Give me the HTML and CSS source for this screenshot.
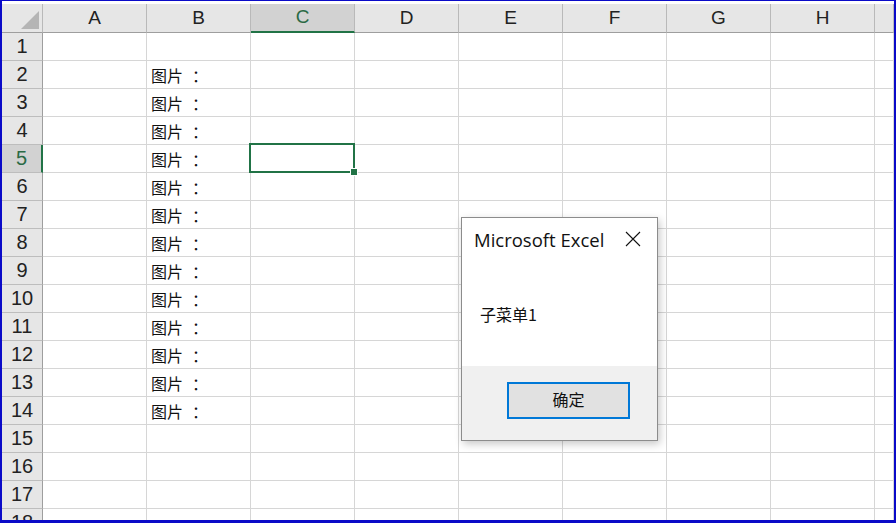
FILE: index.html
```html
<!DOCTYPE html>
<html lang="zh-CN">
<head>
<meta charset="utf-8">
<title>Excel</title>
<link rel="stylesheet" href="styles.css">
</head>
<body>
<div class="frame">
  <div class="sheet">
    <div class="row head">
      <div class="corner"><span class="tri"></span></div>
      <div class="ch">A</div><div class="ch">B</div><div class="ch sel">C</div><div class="ch">D</div><div class="ch">E</div><div class="ch">F</div><div class="ch">G</div><div class="ch">H</div><div class="ch"></div>
    </div>
    <div class="row"><div class="rh">1</div><div></div><div></div><div></div><div></div><div></div><div></div><div></div><div></div><div></div></div>
    <div class="row"><div class="rh">2</div><div></div><div class="txt">图片<span class="colon">：</span></div><div></div><div></div><div></div><div></div><div></div><div></div><div></div></div>
    <div class="row"><div class="rh">3</div><div></div><div class="txt">图片<span class="colon">：</span></div><div></div><div></div><div></div><div></div><div></div><div></div><div></div></div>
    <div class="row"><div class="rh">4</div><div></div><div class="txt">图片<span class="colon">：</span></div><div></div><div></div><div></div><div></div><div></div><div></div><div></div></div>
    <div class="row"><div class="rh sel">5</div><div></div><div class="txt">图片<span class="colon">：</span></div><div class="active"><span class="selbox"><span class="handle"></span></span></div><div></div><div></div><div></div><div></div><div></div><div></div></div>
    <div class="row"><div class="rh">6</div><div></div><div class="txt">图片<span class="colon">：</span></div><div></div><div></div><div></div><div></div><div></div><div></div><div></div></div>
    <div class="row"><div class="rh">7</div><div></div><div class="txt">图片<span class="colon">：</span></div><div></div><div></div><div></div><div></div><div></div><div></div><div></div></div>
    <div class="row"><div class="rh">8</div><div></div><div class="txt">图片<span class="colon">：</span></div><div></div><div></div><div></div><div></div><div></div><div></div><div></div></div>
    <div class="row"><div class="rh">9</div><div></div><div class="txt">图片<span class="colon">：</span></div><div></div><div></div><div></div><div></div><div></div><div></div><div></div></div>
    <div class="row"><div class="rh">10</div><div></div><div class="txt">图片<span class="colon">：</span></div><div></div><div></div><div></div><div></div><div></div><div></div><div></div></div>
    <div class="row"><div class="rh">11</div><div></div><div class="txt">图片<span class="colon">：</span></div><div></div><div></div><div></div><div></div><div></div><div></div><div></div></div>
    <div class="row"><div class="rh">12</div><div></div><div class="txt">图片<span class="colon">：</span></div><div></div><div></div><div></div><div></div><div></div><div></div><div></div></div>
    <div class="row"><div class="rh">13</div><div></div><div class="txt">图片<span class="colon">：</span></div><div></div><div></div><div></div><div></div><div></div><div></div><div></div></div>
    <div class="row"><div class="rh">14</div><div></div><div class="txt">图片<span class="colon">：</span></div><div></div><div></div><div></div><div></div><div></div><div></div><div></div></div>
    <div class="row"><div class="rh">15</div><div></div><div></div><div></div><div></div><div></div><div></div><div></div><div></div><div></div></div>
    <div class="row"><div class="rh">16</div><div></div><div></div><div></div><div></div><div></div><div></div><div></div><div></div><div></div></div>
    <div class="row"><div class="rh">17</div><div></div><div></div><div></div><div></div><div></div><div></div><div></div><div></div><div></div></div>
    <div class="row"><div class="rh">18</div><div></div><div></div><div></div><div></div><div></div><div></div><div></div><div></div><div></div></div>
  </div>

  <div class="dialog">
    <div class="dlg-head">
      <span class="dlg-title">Microsoft Excel</span>
      <svg class="dlg-close" width="16" height="16" viewBox="0 0 16 16"><path d="M1 1 L15 15 M15 1 L1 15" stroke="#111" stroke-width="1.1" fill="none"/></svg>
    </div>
    <div class="dlg-body">子菜单1</div>
    <div class="dlg-foot"><button class="dlg-btn">确定</button></div>
  </div>
</div>
</body>
</html>
```

FILE: styles.css
```css
html, body {
  margin: 0;
  padding: 0;
  background: #fff;
}

.frame {
  position: relative;
  width: 896px;
  height: 523px;
  box-sizing: border-box;
  border: solid #0a0ac8;
  border-width: 1px 2px 3px 2px;
  padding-top: 3px;
  overflow: hidden;
  background: #fff;
  font-family: "Liberation Sans", Arial, sans-serif;
}

.sheet {
  display: flex;
  flex-direction: column;
}

.row {
  display: grid;
  grid-template-columns: 41px repeat(8, 104px) 1fr;
  height: 28px;
  flex: none;
}

.row > div {
  box-sizing: border-box;
  border-right: 1px solid #d6d6d6;
  border-bottom: 1px solid #d6d6d6;
}

.row.head {
  height: 29px;
}

.row.head > div {
  background: #e6e6e6;
  border-right: 1px solid #b9b9b9;
  border-bottom: 1px solid #9e9e9e;
}

.corner {
  display: flex;
  justify-content: flex-end;
  align-items: flex-end;
  padding: 0 3px 3px 0;
}

.tri {
  width: 18px;
  height: 18px;
  background: #b5b5b5;
  clip-path: polygon(100% 0, 100% 100%, 0 100%);
}

.ch {
  display: flex;
  align-items: center;
  justify-content: center;
  font-size: 19px;
  color: #222;
  padding-bottom: 1px;
}

.row.head > .ch.sel {
  background: #d2d2d2;
  border-bottom: 2px solid #217346;
  color: #2a6a45;
}

.row > .rh {
  background: #e6e6e6;
  border-right: 1px solid #9e9e9e;
  border-bottom: 1px solid #bdbdbd;
  display: flex;
  align-items: center;
  justify-content: center;
  font-size: 20px;
  color: #222;
}

.row > .rh.sel {
  background: #d2d2d2;
  border-right: 2px solid #217346;
  color: #2a6a45;
}

.txt {
  display: flex;
  align-items: center;
  padding-left: 4px;
  font-family: "Noto Sans CJK SC", sans-serif;
  font-size: 16px;
  color: #111;
  white-space: nowrap;
}

.colon {
  padding-left: 9px;
}

.active {
  position: relative;
}

.selbox {
  position: absolute;
  left: -2px;
  top: -2px;
  right: -1px;
  bottom: -1px;
  border: 2px solid #217346;
}

.handle {
  position: absolute;
  right: -4px;
  bottom: -4px;
  width: 6px;
  height: 6px;
  background: #217346;
  box-shadow: 0 0 0 1px #fff;
}

.dialog {
  position: absolute;
  left: 459px;
  top: 216px;
  width: 197px;
  height: 224px;
  box-sizing: border-box;
  border: 1px solid #8c8c8c;
  background: #fff;
  box-shadow: 2px 3px 8px rgba(0, 0, 0, 0.22);
  display: flex;
  flex-direction: column;
}

.dlg-head {
  height: 42px;
  display: flex;
  align-items: center;
  justify-content: space-between;
  padding: 0 16px 0 12px;
  flex: none;
}

.dlg-title {
  font-family: "Open Sans", sans-serif;
  font-size: 18.5px;
  color: #111;
  white-space: nowrap;
}

.dlg-close {
  display: block;
}

.dlg-body {
  flex: 1;
  padding: 44px 0 0 18px;
  font-family: "Noto Sans CJK SC", sans-serif;
  font-size: 16px;
  line-height: 20px;
  color: #111;
}

.dlg-foot {
  height: 74px;
  flex: none;
  box-sizing: border-box;
  background: #f0f0f0;
  display: flex;
  justify-content: flex-end;
  align-items: flex-start;
  padding: 16px 27px 0 0;
}

.dlg-btn {
  width: 123px;
  height: 37px;
  box-sizing: border-box;
  border: 2px solid #0078d7;
  background: #e1e1e1;
  font-family: "Noto Sans CJK SC", sans-serif;
  font-size: 16px;
  line-height: 20px;
  color: #111;
  padding: 0 0 3px 0;
  margin: 0;
}
```
